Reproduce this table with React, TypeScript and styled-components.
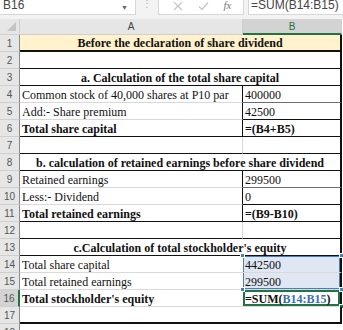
import styled, { createGlobalStyle } from "styled-components";

const GlobalStyle = createGlobalStyle`
  html, body {
    margin: 0;
    padding: 0;
    background: #ffffff;
  }
  * {
    box-sizing: border-box;
  }
`;

const Sheet = styled.div`
  width: 343px;
  height: 330px;
  overflow: hidden;
  background: #f3f3f3;
  font-family: "Liberation Serif", "Times New Roman", serif;
`;

const FormulaBar = styled.div`
  display: flex;
  align-items: flex-start;
  height: 15px;
  overflow: hidden;
  font-family: "Liberation Sans", Arial, sans-serif;
  font-size: 12px;
  color: #444;
`;

const NameBox = styled.div`
  width: 136px;
  height: 15px;
  background: #fff;
  border-right: 1px solid #d6d6d6;
  border-bottom: 1px solid #d6d6d6;
  display: flex;
  align-items: flex-end;
  justify-content: space-between;
  padding: 0 7px 3px 3px;
  line-height: 1;
`;

const Caret = styled.span`
  font-size: 7px;
  color: #666;
`;

const Dots = styled.div`
  width: 22px;
  display: flex;
  justify-content: center;
  color: #aaa;
  font-size: 10px;
  line-height: 8px;
`;

const IconBox = styled.div`
  width: 86px;
  height: 15px;
  background: #fff;
  border: 1px solid #d6d6d6;
  border-top: none;
  display: flex;
  align-items: flex-end;
  justify-content: space-around;
  padding: 0 4px 3px 6px;
  line-height: 1;
`;

const Fx = styled.span`
  font-family: "Liberation Serif", serif;
  font-style: italic;
  font-size: 11px;
  color: #777;
`;

const FormulaInput = styled.div`
  flex: 1;
  height: 15px;
  margin-left: 4px;
  background: #fff;
  border-left: 1px solid #d6d6d6;
  border-bottom: 1px solid #d6d6d6;
  display: flex;
  align-items: flex-end;
  padding: 0 0 3px 2px;
  line-height: 1;
`;

const Grid = styled.div`
  margin-top: 4px;
  display: flex;
  flex-direction: column;
`;

const Row = styled.div<{ $h?: number }>`
  display: grid;
  grid-template-columns: 20px 223px 99px 1fr;
  height: ${(p) => p.$h ?? 17}px;
`;

const Corner = styled.div`
  background: #e6e6e6;
  border-right: 1px solid #cfcfcf;
  border-bottom: 1px solid #cfcfcf;
  position: relative;
  &::after {
    content: "";
    position: absolute;
    right: 3px;
    bottom: 3px;
    border-style: solid;
    border-width: 0 0 9px 9px;
    border-color: transparent transparent #c4c4c4 transparent;
  }
`;

const ColHead = styled.div<{ $active?: boolean }>`
  background: ${(p) => (p.$active ? "#d3d3d3" : "#e6e6e6")};
  border-right: 1px solid #cfcfcf;
  border-bottom: ${(p) => (p.$active ? "2px solid #217346" : "1px solid #cfcfcf")};
  font-family: "Liberation Sans", Arial, sans-serif;
  font-size: 10px;
  color: ${(p) => (p.$active ? "#217346" : "#444")};
  display: flex;
  align-items: center;
  justify-content: center;
`;

const RowHead = styled.div<{ $active?: boolean }>`
  background: ${(p) => (p.$active ? "#d3d3d3" : "#e6e6e6")};
  border-right: ${(p) => (p.$active ? "2px solid #217346" : "1px solid #8a8a8a")};
  border-bottom: 1px solid #cfcfcf;
  font-family: "Liberation Sans", Arial, sans-serif;
  font-size: 10px;
  color: #555;
  display: flex;
  align-items: center;
  justify-content: center;
`;

type Edge = "grid" | "dark" | "thin" | "thick" | "none";

const edge = (e?: Edge) => {
  switch (e) {
    case "dark":
      return "1px solid #111";
    case "thin":
      return "1px solid #6e6e6e";
    case "thick":
      return "2px solid #111";
    case "none":
      return "none";
    default:
      return "1px solid #d9d9d9";
  }
};

const Cell = styled.div<{
  $span?: boolean;
  $bottom?: Edge;
  $right?: Edge;
  $bold?: boolean;
  $center?: boolean;
  $bg?: string;
  $shadow?: string;
}>`
  position: relative;
  grid-column: ${(p) => (p.$span ? "2 / 4" : "auto")};
  background: ${(p) => p.$bg ?? "#fff"};
  border-bottom: ${(p) => edge(p.$bottom)};
  border-right: ${(p) => edge(p.$right)};
  box-shadow: ${(p) => p.$shadow ?? "none"};
  font-size: 12px;
  font-weight: ${(p) => (p.$bold ? 700 : 400)};
  color: #111;
  white-space: nowrap;
  display: flex;
  align-items: center;
  justify-content: ${(p) => (p.$center ? "center" : "flex-start")};
  padding: 1px 2px 0;
  line-height: 1;
`;

const Rest = styled.div`
  background: #fff;
`;

const Handle = styled.span<{ $pos: string; $color?: string }>`
  position: absolute;
  width: 5px;
  height: 5px;
  background: ${(p) => p.$color ?? "#4a7ebb"};
  border: 1px solid #fff;
  ${(p) => p.$pos}
`;

const Ref = styled.span`
  color: #3a6fb0;
`;

const selBlue = "#4a7ebb";

export default function App() {
  return (
    <>
      <GlobalStyle />
      <Sheet>
        <FormulaBar>
          <NameBox>
            <span>B16</span>
            <Caret>▼</Caret>
          </NameBox>
          <Dots>⋮</Dots>
          <IconBox>
            <svg width="10" height="9" viewBox="0 0 10 9">
              <path d="M1 0 L9 8 M9 0 L1 8" stroke="#c4c4c4" strokeWidth="1.2" />
            </svg>
            <svg width="11" height="9" viewBox="0 0 11 9">
              <path d="M1 4.5 L4 7.5 L10 0.5" stroke="#c4c4c4" strokeWidth="1.2" fill="none" />
            </svg>
            <Fx>fx</Fx>
          </IconBox>
          <FormulaInput>=SUM(B14:B15)</FormulaInput>
        </FormulaBar>

        <Grid>
          <Row $h={16}>
            <Corner />
            <ColHead>A</ColHead>
            <ColHead $active>B</ColHead>
            <Rest />
          </Row>

          <Row>
            <RowHead>1</RowHead>
            <Cell $span $bg="#fff2cc" $bold $center $bottom="thick" $right="thick">
              Before the declaration of share dividend
            </Cell>
            <Rest />
          </Row>
          <Row>
            <RowHead>2</RowHead>
            <Cell $span $bottom="dark" $right="thick" />
            <Rest />
          </Row>
          <Row>
            <RowHead>3</RowHead>
            <Cell $span $bold $center $bottom="dark" $right="thick">
              a. Calculation of the total share capital
            </Cell>
            <Rest />
          </Row>
          <Row>
            <RowHead>4</RowHead>
            <Cell $right="dark">Common stock of 40,000 shares at P10 par</Cell>
            <Cell $bottom="thin" $right="thick">400000</Cell>
            <Rest />
          </Row>
          <Row>
            <RowHead>5</RowHead>
            <Cell $right="dark">Add:- Share premium</Cell>
            <Cell $bottom="dark" $right="thick">42500</Cell>
            <Rest />
          </Row>
          <Row>
            <RowHead>6</RowHead>
            <Cell $bold $bottom="dark" $right="dark">Total share capital</Cell>
            <Cell $bold $bottom="dark" $right="thick">=(B4+B5)</Cell>
            <Rest />
          </Row>
          <Row>
            <RowHead>7</RowHead>
            <Cell $bottom="dark" />
            <Cell $bottom="dark" $right="thick" />
            <Rest />
          </Row>
          <Row>
            <RowHead>8</RowHead>
            <Cell $span $bold $center $bottom="dark" $right="thick">
              b. calculation of retained earnings before share dividend
            </Cell>
            <Rest />
          </Row>
          <Row>
            <RowHead>9</RowHead>
            <Cell $right="dark">Retained earnings</Cell>
            <Cell $bottom="thin" $right="thick">299500</Cell>
            <Rest />
          </Row>
          <Row>
            <RowHead>10</RowHead>
            <Cell $right="dark">Less:- Dividend</Cell>
            <Cell $bottom="dark" $right="thick">0</Cell>
            <Rest />
          </Row>
          <Row>
            <RowHead>11</RowHead>
            <Cell $bold $bottom="dark" $right="dark">Total retained earnings</Cell>
            <Cell $bold $bottom="dark" $right="thick">=(B9-B10)</Cell>
            <Rest />
          </Row>
          <Row>
            <RowHead>12</RowHead>
            <Cell $bottom="dark" />
            <Cell $bottom="dark" $right="thick" />
            <Rest />
          </Row>
          <Row>
            <RowHead>13</RowHead>
            <Cell $span $bold $center $bottom="dark" $right="thick">
              c.Calculation of total stockholder's equity
            </Cell>
            <Rest />
          </Row>
          <Row>
            <RowHead>14</RowHead>
            <Cell $right="none">Total share capital</Cell>
            <Cell
              $right="thick"
              $bg="#dfe7f3"
              $shadow={`inset 1px 0 0 ${selBlue}, inset -1px 0 0 ${selBlue}, inset 0 1px 0 ${selBlue}`}
            >
              442500
              <Handle $pos="left: -3px; top: -3px;" />
              <Handle $pos="right: -4px; top: -3px;" />
            </Cell>
            <Rest />
          </Row>
          <Row>
            <RowHead>15</RowHead>
            <Cell $right="none">Total retained earnings</Cell>
            <Cell
              $right="thick"
              $bg="#dfe7f3"
              $shadow={`inset 1px 0 0 ${selBlue}, inset -1px 0 0 ${selBlue}, inset 0 -1px 0 ${selBlue}`}
            >
              299500
            </Cell>
            <Rest />
          </Row>
          <Row>
            <RowHead $active>16</RowHead>
            <Cell $bold $right="none">Total stockholder's equity</Cell>
            <Cell $bold $right="thick" $shadow="inset 0 0 0 2px #217346">
              =SUM(<Ref>B14:B15</Ref>)
              <Handle $pos="left: -3px; top: -3px;" />
              <Handle $pos="right: -4px; top: -3px;" />
              <Handle $pos="right: -4px; bottom: -3px;" $color="#217346" />
            </Cell>
            <Rest />
          </Row>
          <Row>
            <RowHead>17</RowHead>
            <Cell $bottom="thick" $right="none" />
            <Cell $bottom="thick" $right="thick" />
            <Rest />
          </Row>
          <Row>
            <RowHead>18</RowHead>
            <Cell $right="none" />
            <Cell $right="none" />
            <Rest />
          </Row>
        </Grid>
      </Sheet>
    </>
  );
}
